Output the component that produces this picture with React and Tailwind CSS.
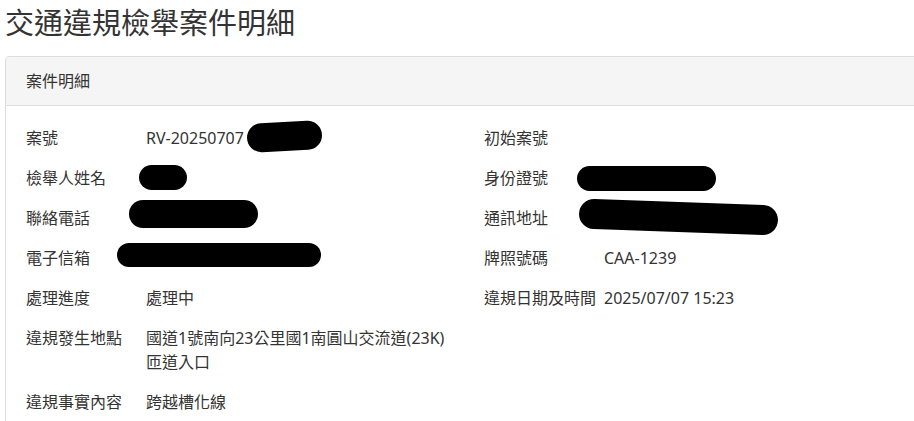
import React from 'react';

// 遮蔽塗黑（截圖上的手繪塗抹）
function Blot({ className }) {
    return <span className={`absolute block bg-black rounded-full ${className}`} />;
}

function Field({ label, children, blot }) {
    return (
        <div className="flex">
            <div className="w-[120px] shrink-0">{label}</div>
            <div className="relative w-[310px]">
                {children}
                {blot}
            </div>
        </div>
    );
}

const rows = [
    {
        left: { label: '案號', value: 'RV-20250707', blot: <Blot className="left-[101px] top-[-4px] w-[75px] h-[29px] rotate-[-3deg]" /> },
        right: { label: '初始案號', value: '' },
    },
    {
        left: { label: '檢舉人姓名', value: '', blot: <Blot className="left-[-7px] top-[-1px] w-[48px] h-[25px]" /> },
        right: { label: '身份證號', value: '', blot: <Blot className="left-[-27px] top-[0px] w-[139px] h-[25px]" /> },
    },
    {
        left: { label: '聯絡電話', value: '', blot: <Blot className="left-[-17px] top-[-6px] w-[129px] h-[28px]" /> },
        right: { label: '通訊地址', value: '', blot: <Blot className="left-[-25px] top-[-4px] w-[199px] h-[30px] rotate-[2deg]" /> },
    },
    {
        left: { label: '電子信箱', value: '', blot: <Blot className="left-[-29px] top-[-3px] w-[204px] h-[24px]" /> },
        right: { label: '牌照號碼', value: 'CAA-1239' },
    },
    {
        left: { label: '處理進度', value: '處理中' },
        right: { label: '違規日期及時間', value: '2025/07/07 15:23' },
    },
    {
        left: { label: '違規發生地點', value: '國道1號南向23公里國1南圓山交流道(23K)匝道入口' },
    },
    {
        left: { label: '違規事實內容', value: '跨越槽化線' },
    },
];

export default function App() {
    return (
        <div
            className="w-full overflow-hidden bg-white text-[#333] pl-[5px] pt-[7px]"
            style={{ fontFamily: '"Noto Sans", "Noto Sans CJK TC", sans-serif' }}
        >
            <h2 className="text-[29px] leading-[32px] font-normal">交通違規檢舉案件明細</h2>

            <div className="mt-[17px] w-[960px] border border-[#ddd] rounded-[4px]">
                <div className="bg-[#f5f5f5] border-b border-[#ddd] px-[20px] py-[12px] text-[16px] leading-[24px] rounded-t-[4px]">
                    案件明細
                </div>

                <div className="px-[20px] pt-[20px] pb-[4px] text-[16px] leading-[24px]">
                    {rows.map((row, i) => (
                        <div key={i} className="flex mb-4">
                            <div className="w-[458px] shrink-0">
                                <Field label={row.left.label} blot={row.left.blot}>
                                    {row.left.value}
                                </Field>
                            </div>
                            {row.right && (
                                <div className="w-[458px]">
                                    <Field label={row.right.label} blot={row.right.blot}>
                                        {row.right.value}
                                    </Field>
                                </div>
                            )}
                        </div>
                    ))}
                </div>
            </div>
        </div>
    );
}
